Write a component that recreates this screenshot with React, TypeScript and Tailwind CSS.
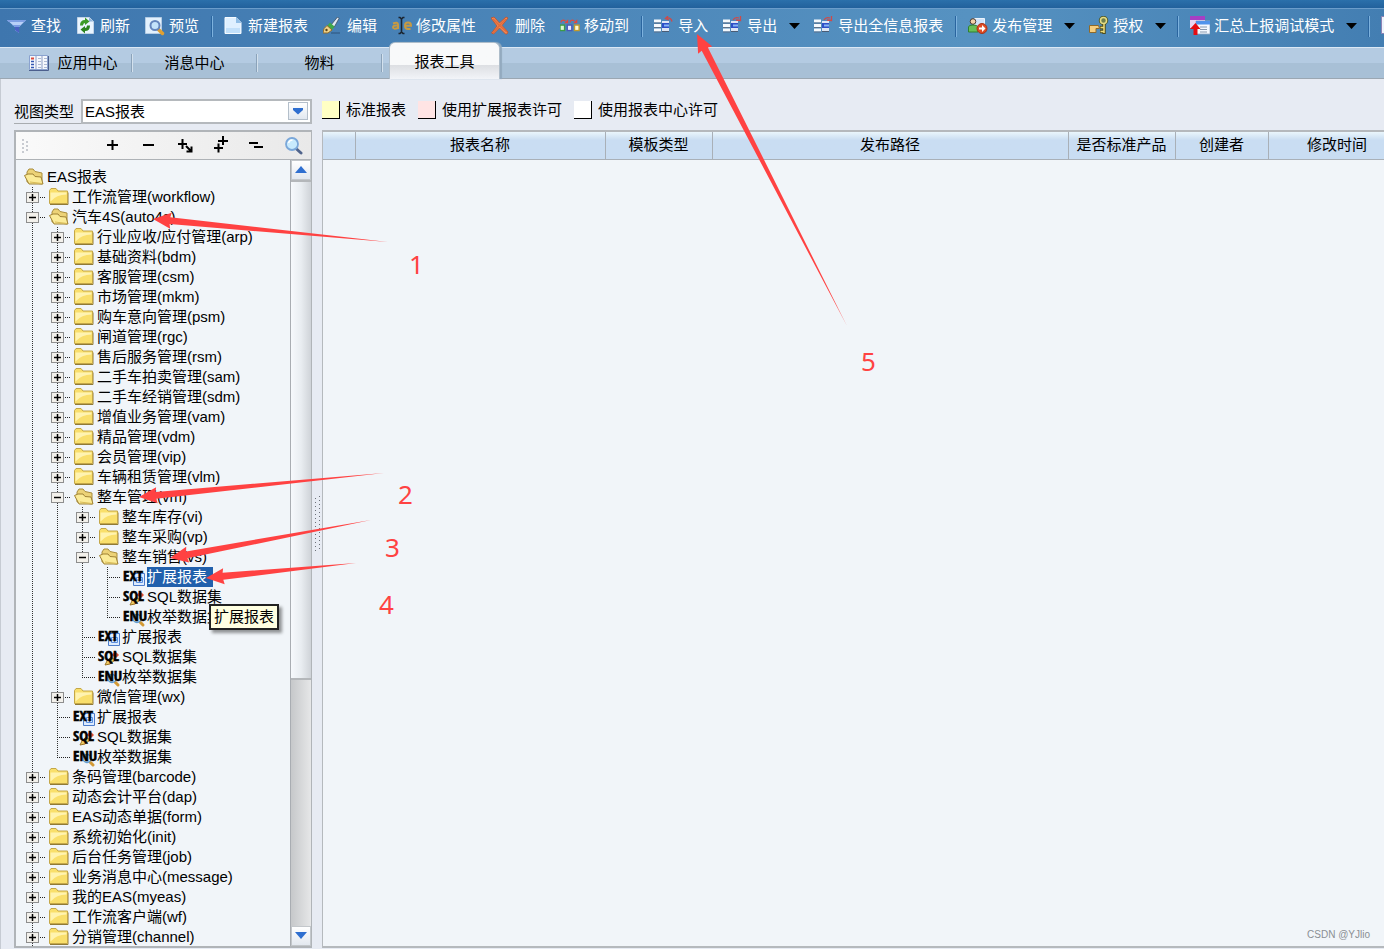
import { Fragment, useState } from 'react'
import type { ReactNode } from 'react'

type TreeItem = {
  depth: number
  label: string
  kind: 'closed' | 'open' | 'ext' | 'sql' | 'enu'
  selected?: boolean
}

const treeItems: TreeItem[] = [
  { depth: 0, label: 'EAS报表', kind: 'open' },
  { depth: 1, label: '工作流管理(workflow)', kind: 'closed' },
  { depth: 1, label: '汽车4S(auto4s)', kind: 'open' },
  { depth: 2, label: '行业应收/应付管理(arp)', kind: 'closed' },
  { depth: 2, label: '基础资料(bdm)', kind: 'closed' },
  { depth: 2, label: '客服管理(csm)', kind: 'closed' },
  { depth: 2, label: '市场管理(mkm)', kind: 'closed' },
  { depth: 2, label: '购车意向管理(psm)', kind: 'closed' },
  { depth: 2, label: '闸道管理(rgc)', kind: 'closed' },
  { depth: 2, label: '售后服务管理(rsm)', kind: 'closed' },
  { depth: 2, label: '二手车拍卖管理(sam)', kind: 'closed' },
  { depth: 2, label: '二手车经销管理(sdm)', kind: 'closed' },
  { depth: 2, label: '增值业务管理(vam)', kind: 'closed' },
  { depth: 2, label: '精品管理(vdm)', kind: 'closed' },
  { depth: 2, label: '会员管理(vip)', kind: 'closed' },
  { depth: 2, label: '车辆租赁管理(vlm)', kind: 'closed' },
  { depth: 2, label: '整车管理(vm)', kind: 'open' },
  { depth: 3, label: '整车库存(vi)', kind: 'closed' },
  { depth: 3, label: '整车采购(vp)', kind: 'closed' },
  { depth: 3, label: '整车销售(vs)', kind: 'open' },
  { depth: 4, label: '扩展报表', kind: 'ext', selected: true },
  { depth: 4, label: 'SQL数据集', kind: 'sql' },
  { depth: 4, label: '枚举数据集', kind: 'enu' },
  { depth: 3, label: '扩展报表', kind: 'ext' },
  { depth: 3, label: 'SQL数据集', kind: 'sql' },
  { depth: 3, label: '枚举数据集', kind: 'enu' },
  { depth: 2, label: '微信管理(wx)', kind: 'closed' },
  { depth: 2, label: '扩展报表', kind: 'ext' },
  { depth: 2, label: 'SQL数据集', kind: 'sql' },
  { depth: 2, label: '枚举数据集', kind: 'enu' },
  { depth: 1, label: '条码管理(barcode)', kind: 'closed' },
  { depth: 1, label: '动态会计平台(dap)', kind: 'closed' },
  { depth: 1, label: 'EAS动态单据(form)', kind: 'closed' },
  { depth: 1, label: '系统初始化(init)', kind: 'closed' },
  { depth: 1, label: '后台任务管理(job)', kind: 'closed' },
  { depth: 1, label: '业务消息中心(message)', kind: 'closed' },
  { depth: 1, label: '我的EAS(myeas)', kind: 'closed' },
  { depth: 1, label: '工作流客户端(wf)', kind: 'closed' },
  { depth: 1, label: '分销管理(channel)', kind: 'closed' },
]

const columns = [
  { label: '', width: 'w-8' },
  { label: '报表名称', width: 'w-[250px]' },
  { label: '模板类型', width: 'w-[107px]' },
  { label: '发布路径', width: 'w-[356px]' },
  { label: '是否标准产品', width: 'w-[107px]' },
  { label: '创建者', width: 'w-[93px]' },
  { label: '修改时间', width: 'w-[138px]' },
]

const legend = [
  { label: '标准报表', color: 'bg-[#ffffc4]' },
  { label: '使用扩展报表许可', color: 'bg-[#ffe4e4]' },
  { label: '使用报表中心许可', color: 'bg-white' },
]

/* ---------- toolbar icons ---------- */

const FilterIcon = () => (
  <svg width="20" height="20" viewBox="0 0 20 20">
    <path d="M0 4h19l-7 7v6l-4-3v-3z" fill="#b9d0f8" />
    <path d="M0 4h19l-1.500 2h-16z" fill="#7fa0e4" />
    <path d="M5 9h9l-2 2v6l-4-3v-3z" fill="#7c9ce4" />
    <path d="M8 11h4v6l-4-3z" fill="#4a62c4" />
  </svg>
)

const RefreshIcon = () => (
  <svg width="20" height="20" viewBox="0 0 20 20">
    <path d="M1.500 1.500h12l4 4v12h-16z" fill="#eaf5ff" stroke="#c3d4e6" />
    <path d="M13 1.500v4h4.500z" fill="#8fb4da" />
    <path d="M4 9.500q0-5.500 5-5.500V1.500L13.500 5.500 9 9V7Q7 7 7 9.500z" fill="#3b9b27" />
    <path d="M14 9.500q0 5.500-5 5.500v2.500L4.500 13.500 9 10v2q2 0 2-2.500z" fill="#2c8420" />
  </svg>
)

const PreviewIcon = () => (
  <svg width="20" height="20" viewBox="0 0 20 20">
    <path d="M.5 1.500h16v16H.5z" fill="#e3f1fd" stroke="#b4cce4" />
    <path d="M13.500 13.500l4 4" stroke="#e0a030" strokeWidth="3.500" strokeLinecap="round" />
    <circle cx="10" cy="9.500" r="4.500" fill="#c4e2fb" stroke="#6585bd" strokeWidth="2" />
  </svg>
)

const NewIcon = () => (
  <svg width="20" height="20" viewBox="0 0 20 20">
    <path d="M1 1.500h11l5 5v11H1z" fill="#dff0ff" stroke="#f6fbff" />
    <path d="M2 12h14v5H2z" fill="#c2e0fa" />
    <path d="M12 1v6h5.500z" fill="#8fbde6" />
  </svg>
)

const EditIcon = () => (
  <svg width="20" height="20" viewBox="0 0 20 20">
    <path d="M8 17h9" stroke="#2d527a" />
    <path d="M14.500 1L16 2.500l-5 9-3-2.500z" fill="#dfe8f2" stroke="#3d4f60" strokeWidth=".8" />
    <path d="M7 6.500l4.500 4L9 14l-5-4z" fill="#3fa84a" />
    <path d="M4 9.500l5 4.500-4 3H0q0-5 4-7.500z" fill="#f0d48a" stroke="#8f6a2a" />
    <circle cx="3.500" cy="14" r="1.200" fill="#5e4318" />
  </svg>
)

const RenameIcon = () => (
  <svg width="20" height="20" viewBox="0 0 20 20">
    <path d="M1 7.500q5-2 5 1v4.500M6 9.500q-5-.5-5 1.800t5 .7" fill="none" stroke="#c79a42" strokeWidth="2" />
    <path d="M13 9.700h6q0-3.200-3-3.200t-3 3.200 3 3.300h2.500" fill="none" stroke="#c79a42" strokeWidth="2" />
    <path d="M6.500 1.500h1.500l1.500 1.500L11 1.500h1.500M9.500 3v13M6.500 17.500h1.500l1.500-1.500 1.500 1.500h1.500" fill="none" stroke="#1b2530" strokeWidth="1.600" />
  </svg>
)

const DeleteIcon = () => (
  <svg width="20" height="20" viewBox="0 0 20 20">
    <path d="M0 2l3-1 5.500 6L15 1l2 1-6 7.500L17 16l-1 2h-1.500l-6-6-6 6-2-1 5.500-7z" fill="#f28a55" stroke="#c04f28" strokeWidth=".8" />
    <path d="M2 3l6.500 6.500L16 16M15 3L8.500 9.500 2 17" fill="none" stroke="#e26a3a" strokeWidth="1.500" />
  </svg>
)

const MoveIcon = () => (
  <svg width="22" height="20" viewBox="0 0 22 20">
    <path d="M1 6q1-4 5-1.500M11 6q1-4 5-1.500" fill="none" stroke="#e2483d" strokeWidth="1.300" />
    <path d="M9 2.500V7H4.500zM19 2.500V7h-4.500z" fill="#e2483d" />
    <rect x="0" y="9" width="5" height="6" fill="#d7f8d0" stroke="#3c9b46" strokeWidth="1.500" />
    <rect x="8" y="9" width="5" height="6" fill="#e8eaff" stroke="#4a58b8" strokeWidth="1.500" />
    <rect x="16" y="9" width="5" height="6" fill="#fff9d2" stroke="#c39b2b" strokeWidth="1.500" />
  </svg>
)

function TransferIcon({ incoming = false }: { incoming?: boolean }) {
  return (
    <svg width="20" height="20" viewBox="0 0 20 20">
      <path d="M0 3.500h7v3H0zM0 8h7v3H0zM0 12.500h7v3H0z" fill="#f5f9fd" />
      <path d="M0 7h7M0 11.500h7M0 16h7" stroke="#5c7189" />
      <path d="M8 5h7v11H8z" fill="#dde6f5" />
      <path d="M8 7h7v5H8z" fill="#2d50c8" />
      <path d="M10 8.500h5v2h-5z" fill="#86b4f5" />
      <path d="M8 15.500h7" stroke="#4a5c74" />
      {incoming ? (
        <path d="M18 5.500q-1-4-5-3.500M14 0l-2.500 2.500L15 4" fill="none" stroke="#cf4a48" strokeWidth="1.300" />
      ) : (
        <path d="M10 4q2-3.500 6-2M13 4l4.500.5V0" fill="none" stroke="#cf4a48" strokeWidth="1.300" />
      )}
    </svg>
  )
}

const PublishIcon = () => (
  <svg width="20" height="20" viewBox="0 0 20 20">
    <path d="M6.500 2.500h10v10h-10z" fill="#cfe3fa" stroke="#eaf3fc" />
    <circle cx="5" cy="5.500" r="2.800" fill="#f3d1a8" stroke="#4d3a30" />
    <path d="M.5 16V11q0-2 4.500-2t5 2v5z" fill="#68bf58" stroke="#2e8130" />
    <circle cx="14" cy="12.500" r="5" fill="#df4c24" stroke="#a83317" />
    <path d="M11 11.500h3V9l3.500 3.500L14 16v-2.500h-3z" fill="#fff" />
  </svg>
)

const KeyIcon = () => (
  <svg width="20" height="20" viewBox="0 0 20 20">
    <circle cx="14.500" cy="4.500" r="3" fill="#fff7c2" stroke="#4e5a2c" strokeWidth="3.500" />
    <circle cx="14.500" cy="4.500" r="3" fill="#6f7f4a" stroke="#e6dc84" strokeWidth="1.500" />
    <path d="M15 8v10M11 11.500h4M11 15.500h4" stroke="#4e4d1c" strokeWidth="3.500" />
    <path d="M15 8v9M11.500 11.500h4M11.500 15.500h4" stroke="#eedb78" strokeWidth="1.500" />
    <path d="M.5 9.500h9l1 3H7v4H.5z" fill="#f6ce7e" stroke="#8f6a2a" />
  </svg>
)

const DebugIcon = () => (
  <svg width="20" height="20" viewBox="0 0 20 20">
    <path d="M0 0h15v12H0z" fill="#e9d6f2" />
    <path d="M0 0h15v4H0z" fill="#a63fc4" />
    <path d="M6 5h14v13H6z" fill="#f3f8ff" stroke="#92a8c4" strokeWidth=".8" />
    <path d="M6 5h14v3.500H6z" fill="#4f93ec" />
    <path d="M10 11h7M10 13.500h7M10 16h7" stroke="#8798ae" />
    <path d="M5.500 7l5 6H7.500v6h-4v-6H0z" fill="#e60d12" />
  </svg>
)

const WindowIcon = () => (
  <svg width="20" height="20" viewBox="0 0 20 20">
    <path d="M.5.5h17v17H.5z" fill="#eef3fb" stroke="#8c83b5" />
  </svg>
)

type ToolbarItem = { label: string; icon: ReactNode; menu?: boolean; separator?: boolean }

const toolbarItems: ToolbarItem[] = [
  { label: '查找', icon: <FilterIcon /> },
  { label: '刷新', icon: <RefreshIcon /> },
  { label: '预览', icon: <PreviewIcon />, separator: true },
  { label: '新建报表', icon: <NewIcon /> },
  { label: '编辑', icon: <EditIcon /> },
  { label: '修改属性', icon: <RenameIcon /> },
  { label: '删除', icon: <DeleteIcon /> },
  { label: '移动到', icon: <MoveIcon />, separator: true },
  { label: '导入', icon: <TransferIcon incoming /> },
  { label: '导出', icon: <TransferIcon />, menu: true },
  { label: '导出全信息报表', icon: <TransferIcon />, separator: true },
  { label: '发布管理', icon: <PublishIcon />, menu: true },
  { label: '授权', icon: <KeyIcon />, menu: true, separator: true },
  { label: '汇总上报调试模式', icon: <DebugIcon />, menu: true, separator: true },
]

function Toolbar() {
  return (
    <div className="flex h-[39px] flex-none items-center overflow-hidden border-t border-[#6b9dcb] bg-linear-to-r from-[#3e76ae] via-[#5692c1] via-70% to-[#437eb2] pb-1">
      {toolbarItems.map((item) => (
        <Fragment key={item.label}>
          <button className="flex flex-none items-center gap-1 pr-2 pl-[7px] whitespace-nowrap text-white">
            <span className="flex w-5 flex-none justify-center">{item.icon}</span>
            {item.label}
          </button>
          {item.menu && (
            <button aria-label={`${item.label}菜单`} className="flex w-[22px] flex-none pl-1">
              <svg width="12" height="6" viewBox="0 0 12 6">
                <path d="M0 0h11L5.500 6z" fill="#000" />
              </svg>
            </button>
          )}
          {item.separator && (
            <div className="mx-1 h-[21px] w-0.5 flex-none border-l border-[#2a659f] bg-[#7db2de]" />
          )}
        </Fragment>
      ))}
      <button aria-label="窗口" className="flex-none pl-[7px]">
        <WindowIcon />
      </button>
    </div>
  )
}

/* ---------- tabs ---------- */

const AppCenterIcon = () => (
  <svg width="20" height="16" viewBox="0 0 20 16">
    <path d="M.5.5h18v14H.5z" fill="#f5f8fd" stroke="#8aa2cf" />
    <path d="M0 15.500h19.500V1" fill="none" stroke="#4c5f8d" />
    <path d="M7 1v13M13 1v13" stroke="#8d9ec4" />
    <path d="M9 3.500h3M9 6.500h3M9 9.500h3M9 12.500h3M15 3.500h3M15 6.500h3M15 9.500h3M15 12.500h3" stroke="#aebad2" />
    <path d="M2 6.500h3M2 9.500h3M2 12.500h3" stroke="#3458b2" strokeWidth="1.500" />
    <path d="M2 3.500h3" stroke="#dc4a3a" strokeWidth="2" />
  </svg>
)

function TabBar() {
  const tabClass = 'flex h-[30px] flex-none items-center justify-center gap-2'
  const divider = <div className="h-[18px] w-0.5 flex-none border-l border-[#8ba3ba] bg-[#d3e1ed]" />
  return (
    <nav className="flex h-8 flex-none items-center border-t border-b border-t-[#dbe8f5] border-b-[#9ba7b2] bg-linear-to-b from-[#b4cbe2] from-50% to-[#a8c0d6] to-50%">
      <button className={`${tabClass} w-[131px] pl-4`}>
        <AppCenterIcon />
        应用中心
      </button>
      {divider}
      <button className={`${tabClass} w-[123px]`}>消息中心</button>
      {divider}
      <button className={`${tabClass} w-[123px]`}>物料</button>
      {divider}
      <button className="z-10 -mt-1.5 ml-1.5 h-[37px] w-[111px] flex-none rounded-t-md border border-b-0 border-[#aebdca] bg-linear-to-b from-[#f8f9fa] from-60% via-[#dcdee2] via-60% to-[#f2f4f8] pt-0.5 shadow-[2px_0_1px_#93aabf]">
        报表工具
      </button>
    </nav>
  )
}

/* ---------- tree ---------- */

const ClosedFolder = () => (
  <svg width="20" height="20" viewBox="0 0 20 20">
    <path d="M1 17.500h18V5.500" fill="none" stroke="#8f7a38" />
    <path d="M.5 16.500V3.500l1.500-2h5l2 2.500h9.500v12.500z" fill="#f9df6c" stroke="#c4a748" />
    <path d="M1.500 5.500h16v2q-10 0-16 7z" fill="#fff3b0" />
  </svg>
)

const OpenFolder = () => (
  <svg width="20" height="20" viewBox="0 0 20 20">
    <path d="M3 15V5l2-3h4l2 2.500 7 1.500v11z" fill="#ecd277" stroke="#a88c3c" />
    <path d="M.5 8.500L4 7h5l2 2.500 6 .5 2 7H5z" fill="#fbeb97" stroke="#a08234" />
    <path d="M6 15l12 1.500" stroke="#d9bc58" />
  </svg>
)

function LeafIcon({ kind }: { kind: 'ext' | 'sql' | 'enu' }) {
  const text = { ext: 'EXT', sql: 'SQL', enu: 'ENU' }[kind]
  return (
    <svg className="flex-none overflow-visible" width="22" height="20" viewBox="0 0 22 20">
      {kind === 'ext' && (
        <>
          <path d="M10.500 6.500h11v12h-11z" fill="#dcebff" stroke="#4c7ccb" />
          <path d="M13.500 15.500v-5h6v5zM13 13h7M16.500 10v6" fill="none" stroke="#5c8fe0" />
        </>
      )}
      {kind === 'sql' && (
        <>
          <path d="M17 4l4 4-3 3-4-3z" fill="#dc4c35" />
          <path d="M13 10l4 3-5 4-5 1 2-4z" fill="#eccb66" stroke="#9b7426" />
        </>
      )}
      {kind === 'enu' && (
        <>
          <path d="M17 15l3 3" stroke="#d39a35" strokeWidth="3" strokeLinecap="round" />
          <circle cx="14" cy="11.500" r="4" fill="#d9effe" stroke="#5e9dd4" strokeWidth="1.500" />
        </>
      )}
      <text x="0" y="14" fontSize="15" fontWeight="700" stroke="#000" strokeWidth=".5" className="font-[Open_Sans_Condensed,Roboto_Condensed,Liberation_Sans_Narrow,Liberation_Sans,sans-serif]">
        {text}
      </text>
    </svg>
  )
}

function Guide() {
  return (
    <svg className="flex-none" width="25" height="20" viewBox="0 0 25 20">
      <path d="M12.500 0v20" stroke="#333" strokeDasharray="1 1" />
    </svg>
  )
}

function Branch({ last }: { last: boolean }) {
  return (
    <svg className="flex-none" width="25" height="20" viewBox="0 0 25 20">
      <path d={last ? 'M12.500 0v11' : 'M12.500 0v20'} stroke="#333" strokeDasharray="1 1" />
      <path d="M12 10.500h13" stroke="#222" strokeDasharray="1 1" />
    </svg>
  )
}

function Expander({ open }: { open: boolean }) {
  return (
    <button aria-label={open ? '折叠' : '展开'} className="flex h-5 w-[25px] flex-none items-center">
      <svg width="25" height="20" viewBox="0 0 25 20">
        <path d="M12.500 0v20" stroke="#333" strokeDasharray="1 1" />
        <path d="M20 10.500h5" stroke="#222" strokeDasharray="1 1" />
        <rect x="6.500" y="5.500" width="12" height="10" fill="#f3f1ec" stroke="#8e8e8e" />
        <path d={open ? 'M9 10.500h7' : 'M9 10.500h7M12.500 7v7'} stroke="#000" strokeWidth="1.500" />
      </svg>
    </button>
  )
}

function TreeRow({ item, last }: { item: TreeItem; last: boolean }) {
  const leaf = item.kind !== 'closed' && item.kind !== 'open'
  return (
    <li className="flex h-5 items-center whitespace-nowrap">
      {Array.from({ length: Math.max(item.depth - 1, 0) }, (_, i) => (
        <Guide key={i} />
      ))}
      {item.depth > 0 && (leaf ? <Branch last={last} /> : <Expander open={item.kind === 'open'} />)}
      <span className={leaf ? 'ml-[3px] flex' : 'mr-[3px] ml-1 flex'}>
        {item.kind === 'closed' && <ClosedFolder />}
        {item.kind === 'open' && <OpenFolder />}
        {(item.kind === 'ext' || item.kind === 'sql' || item.kind === 'enu') && <LeafIcon kind={item.kind} />}
      </span>
      {item.selected ? (
        <span className="relative ml-0.5 h-5 bg-[#2160ac] pr-1.5 leading-5 text-white">
          {item.label}
          <span role="tooltip" className="absolute top-[37px] left-[62px] z-20 border-2 border-[#222] bg-[#ffffe1] px-[3px] leading-[22px] text-black shadow-[3px_3px_3px_#0006]">
            扩展报表
          </span>
        </span>
      ) : (
        <span className={leaf ? 'ml-0.5 leading-5' : 'leading-5'}>{item.label}</span>
      )}
    </li>
  )
}

const treeTools = [
  { label: '展开', d: 'M4 9h11M9.500 4v10' },
  { label: '折叠', d: 'M4 9h11' },
  { label: '展开下级', d: 'M3 8h9M7.500 3v10M11 10l5 5M16.500 10.500v5h-5' },
  { label: '全部展开', d: 'M7 5h10M12 0v9M3 12h9M7.500 7.500v9' },
  { label: '全部折叠', d: 'M2 7h9M7 11h9' },
]

function TreeToolbar() {
  return (
    <div className="flex h-7 flex-none items-center border-b border-[#aeb2b6] bg-linear-to-r from-[#fafafa] to-[#e9e9e9]">
      <svg className="ml-1.5 flex-none" width="8" height="16" viewBox="0 0 8 16">
        <path d="M1 1v14M5 3v12" stroke="#b8bcc4" strokeWidth="1.500" strokeDasharray="2 2" />
      </svg>
      <div className="flex flex-1 justify-end">
        {treeTools.map((tool) => (
          <button key={tool.label} aria-label={tool.label} className="flex w-9 justify-center">
            <svg width="20" height="20" viewBox="0 0 20 20">
              <path d={tool.d} fill="none" stroke="#000" strokeWidth="2" />
            </svg>
          </button>
        ))}
        <button aria-label="查找" className="flex w-9 justify-center">
          <svg width="20" height="20" viewBox="0 0 20 20">
            <path d="M13 12.500l5 4.500" stroke="#50648c" strokeWidth="3" strokeLinecap="round" />
            <circle cx="9" cy="8" r="6" fill="#c8eafd" stroke="#7aa7d9" strokeWidth="1.800" />
            <path d="M5.500 7q1-3 4-3" fill="none" stroke="#fff" strokeWidth="1.500" />
          </svg>
        </button>
      </div>
    </div>
  )
}

function ScrollBar() {
  const buttonClass = 'flex h-5 flex-none items-center justify-center border border-[#c3c7cb] bg-linear-to-b from-white to-[#e3e8ef]'
  return (
    <div className="flex w-[21px] flex-none flex-col border-l border-[#a9adb2] bg-linear-to-r from-[#c6c8ca] to-[#e6e7e8]">
      <button aria-label="向上滚动" className={buttonClass}>
        <svg width="12" height="8" viewBox="0 0 12 8">
          <path d="M6 0l6 7H0z" fill="#2f6fd0" />
        </svg>
      </button>
      <div className="flex flex-1 flex-col">
        <div className="h-[67%] border-y-2 border-[#b4b7ba] bg-linear-to-r from-[#f6f9fc] via-[#e9edf1] to-[#cfd3d8]" />
      </div>
      <button aria-label="向下滚动" className={buttonClass}>
        <svg width="12" height="8" viewBox="0 0 12 8">
          <path d="M0 0h12L6 7z" fill="#2f6fd0" />
        </svg>
      </button>
    </div>
  )
}

function Sidebar() {
  const [view, setView] = useState('EAS报表')
  return (
    <aside className="flex w-[298px] flex-none flex-col">
      <div className="flex h-[25px] flex-none">
        <label htmlFor="view-type" className="w-[67px] flex-none border-b border-[#a8acb0] leading-[26px]">
          视图类型
        </label>
        <div className="relative flex-1 border-2 border-[#b5b9bd] bg-white">
          <select
            id="view-type"
            value={view}
            onChange={(e) => setView(e.target.value)}
            className="h-full w-full appearance-none pl-0.5 leading-[21px]"
          >
            <option>EAS报表</option>
          </select>
          <span className="pointer-events-none absolute top-px right-0.5 flex h-[18px] w-5 items-center justify-center border border-[#b4bfca] bg-linear-to-b from-white to-[#e1e8f0]">
            <svg width="12" height="8" viewBox="0 0 12 8">
              <path d="M1 1h10v2L6 7.500 1 3z" fill="#2f6fd0" />
            </svg>
          </span>
        </div>
      </div>
      <div className="mt-1.5 flex min-h-0 flex-1 flex-col border-2 border-r border-[#b0b4b8] bg-[#f1f5f9]">
        <TreeToolbar />
        <div className="flex min-h-0 flex-1">
          <ul className="min-w-0 flex-1 overflow-hidden pt-[7px] pl-1">
            {treeItems.map((item, i) => (
              <TreeRow key={i} item={item} last={(treeItems[i + 1]?.depth ?? item.depth) < item.depth} />
            ))}
          </ul>
          <ScrollBar />
        </div>
      </div>
    </aside>
  )
}

function Splitter() {
  return (
    <div className="flex w-2.5 flex-none items-center justify-center">
      <svg width="6" height="58" viewBox="0 0 6 58">
        <path d="M1.500 3v54M5.500 1v56" stroke="#6b7078" strokeDasharray="1 3" />
      </svg>
    </div>
  )
}

function ReportGrid() {
  return (
    <section className="flex min-w-0 flex-1 flex-col">
      <div className="flex h-[25px] flex-none items-center pb-1">
        {legend.map((item) => (
          <div key={item.label} className="mr-3 flex items-center gap-1.5 whitespace-nowrap">
            <span className={`size-[18px] border-r border-b border-black ${item.color}`} />
            {item.label}
          </div>
        ))}
      </div>
      <div className="mt-1.5 min-h-0 flex-1 overflow-hidden border-y-2 border-l border-[#b5b9bd] bg-[#f1f5f9]">
        <table className="w-full min-w-[1083px] table-fixed border-collapse">
          <thead>
            <tr className="h-[27px] bg-linear-to-b from-[#eaf6fc] via-[#c9ddf2] via-30% to-[#c9ddf2] to-85%">
              {columns.map((col, i) => (
                <th key={i} className={`${col.width} border-r border-b border-[#a9b0b7] p-0 font-normal`}>
                  {col.label}
                </th>
              ))}
            </tr>
          </thead>
          <tbody />
        </table>
      </div>
    </section>
  )
}

/* ---------- step annotations ---------- */

const steps = [
  { n: 1, tail: [388, 242], tip: [153, 219], text: [409, 274] },
  { n: 2, tail: [384, 473], tip: [139, 497], text: [398, 504] },
  { n: 3, tail: [371, 520], tip: [170, 558], text: [385, 557] },
  { n: 4, tail: [356, 563], tip: [206, 578], text: [379, 614] },
  { n: 5, tail: [847, 326], tip: [697, 34], text: [861, 371] },
]

function arrowPath([x1, y1]: number[], [x2, y2]: number[]) {
  const length = Math.hypot(x2 - x1, y2 - y1)
  const ux = (x2 - x1) / length
  const uy = (y2 - y1) / length
  const at = (back: number, side: number) =>
    `${(x2 - ux * back - uy * side).toFixed(1)} ${(y2 - uy * back + ux * side).toFixed(1)}`
  return `M${x1} ${y1}L${at(17, 3.5)}L${at(18, 8)}L${x2} ${y2}L${at(18, -8)}L${at(17, -3.5)}Z`
}

function Annotations() {
  return (
    <svg className="pointer-events-none absolute inset-0 z-30 h-full w-full" fill="#ff4242">
      {steps.map((step) => (
        <g key={step.n}>
          <path d={arrowPath(step.tail, step.tip)} />
          <text x={step.text[0]} y={step.text[1]} fontSize="26" className="font-[Noto_Sans,sans-serif]">
            {step.n}
          </text>
        </g>
      ))}
    </svg>
  )
}

export default function App() {
  return (
    <div className="relative flex h-screen flex-col overflow-hidden bg-[#e7ebf3] font-[Liberation_Sans,Noto_Sans_CJK_SC,sans-serif] text-[15px] leading-5 text-black">
      <div className="h-2 flex-none bg-linear-to-b from-[#2b70ab] to-[#22619c]" />
      <Toolbar />
      <TabBar />
      <main className="flex min-h-0 flex-1 border-l border-[#c6cbd3] pt-5 pb-px pl-[13px]">
        <Sidebar />
        <Splitter />
        <ReportGrid />
      </main>
      <Annotations />
      <div className="absolute right-3.5 bottom-1.5 text-[10px] leading-4 text-[#8a8f94]">CSDN @YJlio</div>
    </div>
  )
}
